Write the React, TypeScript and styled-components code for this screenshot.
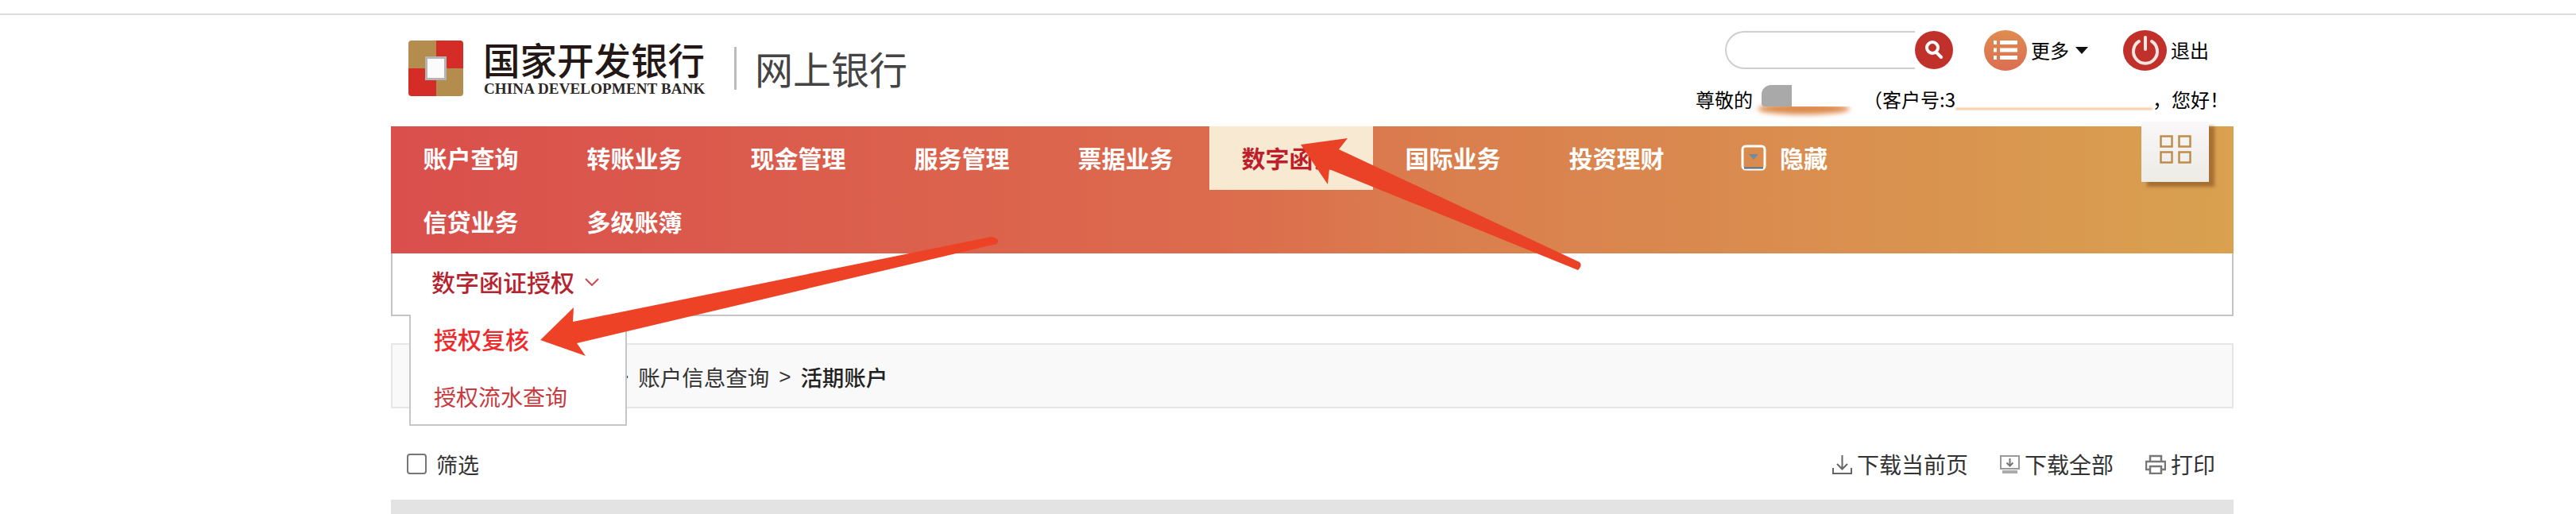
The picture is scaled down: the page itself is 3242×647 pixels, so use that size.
import styled, { createGlobalStyle } from "styled-components";

const CJK = `"Noto Sans CJK SC", "Noto Sans", sans-serif`;

const Global = createGlobalStyle`
  html, body {
    margin: 0;
    padding: 0;
    background: #fff;
    font-family: ${CJK};
  }
`;

const Page = styled.div`
  position: relative;
  width: 3242px;
  height: 647px;
  padding-top: 17px;
  box-sizing: border-box;
  overflow: hidden;
`;

const TopLine = styled.div`
  height: 2px;
  background: #dcdcdc;
`;

const Container = styled.div`
  width: 2319px;
  margin-left: 492px;
`;

const Header = styled.header`
  height: 140px;
  display: flex;
  justify-content: space-between;
`;

const Brand = styled.div`
  display: flex;
  align-items: flex-start;
  padding: 32px 0 0 22px;
`;

const Logo = styled.div`
  position: relative;
  width: 69px;
  height: 70px;
  border-radius: 4px;
  overflow: hidden;
  display: grid;
  grid-template-columns: 1fr 1fr;
  grid-template-rows: 1fr 1fr;
`;

const LogoCell = styled.div<{ $red?: boolean }>`
  background: ${(p) => (p.$red ? "#d42c27" : "#b38c4e")};
`;

const LogoCore = styled.div`
  position: absolute;
  left: 21px;
  top: 20px;
  width: 27px;
  height: 30px;
  box-sizing: border-box;
  background: #fbfbfb;
  border: 3px solid #b4b4b4;
`;

const BrandText = styled.div`
  margin-left: 25px;
  width: 280px;
`;

const BrandCn = styled.div`
  font-size: 46.5px;
  line-height: 50px;
  margin-top: -2px;
  font-weight: 500;
  color: #231815;
  white-space: nowrap;
`;

const BrandEn = styled.div`
  font-family: "Liberation Serif", serif;
  font-weight: 700;
  font-size: 19px;
  line-height: 20px;
  margin-top: 3px;
  margin-left: 1px;
  color: #2c2624;
  white-space: nowrap;
  letter-spacing: 0.15px;
`;

const Divider = styled.div`
  width: 3px;
  height: 54px;
  margin: 8px 0 0 36px;
  background: #bcbcbc;
`;

const Product = styled.div`
  margin: 5px 0 0 23px;
  font-size: 48px;
  line-height: 58px;
  font-weight: 400;
  color: #444;
  white-space: nowrap;
`;

const Account = styled.div`
  display: flex;
  flex-direction: column;
  align-items: flex-end;
  padding: 18px 6px 0 0;
`;

const ActionRow = styled.div`
  display: flex;
  align-items: center;
  height: 52px;
  padding-right: 25px;
`;

const SearchBox = styled.div`
  width: 239px;
  height: 48px;
  box-sizing: border-box;
  border: 2px solid #cfcfcf;
  border-right: 0;
  border-radius: 24px 0 0 24px;
`;

const RoundIcon = styled.div<{ $w: number; $h: number; $bg: string; $gap?: number }>`
  width: ${(p) => p.$w}px;
  height: ${(p) => p.$h}px;
  margin-left: ${(p) => p.$gap ?? 0}px;
  border-radius: 50%;
  background: ${(p) => p.$bg};
  display: flex;
  align-items: center;
  justify-content: center;
  flex: none;
`;

const ActionLabel = styled.span`
  margin-left: 5px;
  font-size: 24px;
  line-height: 30px;
  color: #000;
  white-space: nowrap;
`;

const Caret = styled.i`
  width: 0;
  height: 0;
  margin-left: 8px;
  border-left: 8px solid transparent;
  border-right: 8px solid transparent;
  border-top: 9px solid #111;
`;

const Greeting = styled.div`
  display: flex;
  align-items: center;
  height: 30px;
  margin-top: 21px;
  font-size: 24px;
  line-height: 30px;
  color: #000;
  white-space: nowrap;
`;

const Masked = styled.span<{ $w: number }>`
  position: relative;
  display: inline-block;
  width: ${(p) => p.$w}px;
  height: 30px;
`;

const CustomerNo = styled.span`
  margin-left: 4px;
`;

const Smudge = styled.i`
  position: absolute;
  left: 6px;
  top: 20px;
  width: 116px;
  height: 14px;
  border-radius: 50%;
  background: #dc8a4c;
  filter: blur(3px);
`;

const GreyPatch = styled.i`
  position: absolute;
  left: 11px;
  top: -3px;
  width: 38px;
  height: 27px;
  border-radius: 12px 0 0 4px;
  background: #a9a9a9;
`;

const WhitePatch = styled.i`
  position: absolute;
  left: 49px;
  top: -3px;
  width: 88px;
  height: 27px;
  background: #fff;
`;

const Underline = styled.i`
  position: absolute;
  left: 0;
  right: 0;
  bottom: 2px;
  height: 2px;
  background: #eeb37c;
  filter: blur(1px);
`;

const Nav = styled.nav`
  position: relative;
  height: 160px;
  background: linear-gradient(90deg, #da4f4c 0%, #dc6b4d 45%, #da7d4e 56%, #d9a150 100%);
`;

const NavRow = styled.div`
  display: flex;
  height: 80px;
`;

const NavItem = styled.a<{ $active?: boolean }>`
  width: 206px;
  display: flex;
  align-items: center;
  justify-content: center;
  padding: 0 5px 2px 0;
  box-sizing: border-box;
  font-size: 30px;
  font-weight: 700;
  line-height: 36px;
  white-space: nowrap;
  color: ${(p) => (p.$active ? "#bd1f2c" : "#fff")};
  background: ${(p) => (p.$active ? "#f8ead2" : "transparent")};
`;

const NavToggle = styled.a`
  display: flex;
  align-items: center;
  gap: 17px;
  margin-left: 51px;
  padding-bottom: 2px;
  font-size: 30px;
  font-weight: 700;
  color: #fff;
  white-space: nowrap;
`;

const GridButton = styled.div`
  position: absolute;
  left: 2203px;
  top: -6px;
  width: 85px;
  height: 76px;
  display: flex;
  align-items: center;
  justify-content: center;
  padding-bottom: 6px;
  box-sizing: border-box;
  background: linear-gradient(180deg, #f9f7f8, #ecebe5);
  box-shadow: 7px 6px 4px rgba(150, 95, 40, 0.75);
`;

const SubBar = styled.div`
  position: relative;
  height: 79px;
  box-sizing: border-box;
  border: 2px solid #c4c4c4;
  border-top: 0;
  display: flex;
  align-items: flex-start;
  padding: 17px 0 0 49px;
  color: #b5232f;
  font-size: 30px;
  line-height: 36px;
  font-weight: 500;
`;

const Chevron = styled.svg`
  margin: 14px 0 0 13px;
`;

const Dropdown = styled.div`
  position: absolute;
  left: 21px;
  top: 77px;
  z-index: 2;
  width: 274px;
  height: 140px;
  box-sizing: border-box;
  background: #fff;
  border: 2px solid #c6c6c6;
  border-top: 0;
  padding: 12px 0 0 29px;
`;

const DropItem = styled.div<{ $current?: boolean }>`
  height: 36px;
  line-height: 36px;
  white-space: nowrap;
  margin-bottom: 37px;
  font-size: ${(p) => (p.$current ? 30 : 28)}px;
  font-weight: ${(p) => (p.$current ? 500 : 400)};
  color: ${(p) => (p.$current ? "#ee2a2c" : "#c83a3e")};
`;

const Crumbs = styled.div`
  height: 82px;
  margin-top: 34px;
  box-sizing: border-box;
  border: 2px solid #e6e6e6;
  background: #f9f9f9;
  display: flex;
  align-items: center;
  padding: 2px 0 0 270px;
  font-size: 27.5px;
  color: #333;
  white-space: nowrap;
`;

const CrumbSep = styled.span`
  font-family: "Liberation Sans", sans-serif;
  font-size: 26px;
  margin: 0 12px;
`;

const CrumbCurrent = styled.span`
  font-weight: 500;
  color: #222;
`;

const Tools = styled.div`
  height: 115px;
  display: flex;
  align-items: center;
  justify-content: space-between;
  box-sizing: border-box;
  padding: 25px 23px 0 20px;
`;

const Filter = styled.label`
  display: flex;
  align-items: center;
  gap: 12px;
  font-size: 27px;
  color: #333;
`;

const Check = styled.i`
  width: 25px;
  height: 26px;
  box-sizing: border-box;
  border: 2px solid #767676;
  border-radius: 4px;
`;

const ToolLinks = styled.div`
  display: flex;
  align-items: center;
  gap: 40px;
`;

const ToolLink = styled.a`
  display: flex;
  align-items: center;
  gap: 6px;
  font-size: 28px;
  color: #333;
  white-space: nowrap;
`;

const TableHead = styled.div`
  height: 18px;
  background: #e3e3e3;
`;

const Annotations = styled.svg`
  position: absolute;
  left: 0;
  top: 0;
  z-index: 5;
  pointer-events: none;
`;

const navTop = ["账户查询", "转账业务", "现金管理", "服务管理", "票据业务", "数字函证", "国际业务", "投资理财"];

export default function App() {
  return (
    <Page>
      <Global />
      <TopLine />
      <Container>
        <Header>
          <Brand>
            <Logo>
              <LogoCell />
              <LogoCell $red />
              <LogoCell $red />
              <LogoCell />
              <LogoCore />
            </Logo>
            <BrandText>
              <BrandCn>国家开发银行</BrandCn>
              <BrandEn>CHINA DEVELOPMENT BANK</BrandEn>
            </BrandText>
            <Divider />
            <Product>网上银行</Product>
          </Brand>

          <Account>
            <ActionRow>
              <SearchBox />
              <RoundIcon $w={48} $h={48} $bg="#c0312b">
                <svg width="28" height="28" viewBox="0 0 28 28" fill="none" stroke="#fff" strokeLinecap="round">
                  <circle cx="12" cy="11" r="7" strokeWidth="4" />
                  <path d="M17 17l6 6" strokeWidth="4" />
                </svg>
              </RoundIcon>
              <RoundIcon $w={54} $h={51} $bg="linear-gradient(180deg, #e08c50, #dc6d50)" $gap={39}>
                <svg width="30" height="26" viewBox="0 0 30 26" fill="#fff">
                  <rect x="0" y="1" width="4" height="5" />
                  <rect x="8" y="1" width="22" height="5" />
                  <rect x="0" y="10.5" width="4" height="5" />
                  <rect x="8" y="10.5" width="22" height="5" />
                  <rect x="0" y="20" width="4" height="5" />
                  <rect x="8" y="20" width="22" height="5" />
                </svg>
              </RoundIcon>
              <ActionLabel>更多</ActionLabel>
              <Caret />
              <RoundIcon $w={55} $h={51} $bg="#c0312b" $gap={44}>
                <svg width="36" height="38" viewBox="0 0 36 38" fill="none" stroke="#f6e4e0" strokeWidth="4" strokeLinecap="round">
                  <path d="M18 3v15" />
                  <path d="M10 8a15 15 0 1 0 16 0" />
                </svg>
              </RoundIcon>
              <ActionLabel>退出</ActionLabel>
            </ActionRow>
            <Greeting>
              尊敬的
              <Masked $w={135}>
                <Smudge />
                <GreyPatch />
                <WhitePatch />
              </Masked>
              <CustomerNo>（客户号:3</CustomerNo>
              <Masked $w={248}>
                <Underline />
              </Masked>
              ，您好！
            </Greeting>
          </Account>
        </Header>

        <Nav>
          <NavRow>
            {navTop.map((label) => (
              <NavItem key={label} $active={label === "数字函证"}>
                {label}
              </NavItem>
            ))}
            <NavToggle>
              <svg width="32" height="33" viewBox="0 0 32 33" fill="none">
                <rect x="2" y="2" width="28" height="29" rx="4" stroke="#fff" strokeWidth="3" />
                <path d="M4 29.5h24" stroke="#4a6f90" strokeWidth="2" />
                <path d="M10 12h12l-6 7z" fill="#6f8ba0" />
              </svg>
              隐藏
            </NavToggle>
          </NavRow>
          <NavRow>
            <NavItem>信贷业务</NavItem>
            <NavItem>多级账簿</NavItem>
          </NavRow>
          <GridButton>
            <svg width="40" height="36" viewBox="0 0 40 36" fill="none" stroke="#bf8c4c" strokeWidth="2.5">
              <rect x="1.5" y="1.5" width="14" height="13" />
              <rect x="24.5" y="1.5" width="14" height="13" />
              <rect x="1.5" y="21.5" width="14" height="13" />
              <rect x="24.5" y="21.5" width="14" height="13" />
            </svg>
          </GridButton>
        </Nav>

        <SubBar>
          数字函证授权
          <Chevron width="18" height="10" viewBox="0 0 18 10" fill="none" stroke="#cb4a50" strokeWidth="2">
            <path d="M1 1l8 8 8-8" />
          </Chevron>
          <Dropdown>
            <DropItem $current>授权复核</DropItem>
            <DropItem>授权流水查询</DropItem>
          </Dropdown>
        </SubBar>

        <Crumbs>
          <CrumbSep>&gt;</CrumbSep>
          账户信息查询
          <CrumbSep>&gt;</CrumbSep>
          <CrumbCurrent>活期账户</CrumbCurrent>
        </Crumbs>

        <Tools>
          <Filter>
            <Check />
            筛选
          </Filter>
          <ToolLinks>
            <ToolLink>
              <svg width="25" height="25" viewBox="0 0 25 25" fill="none" stroke="#666" strokeWidth="2">
                <path d="M12.5 1v17M6 12l6.5 6.5L19 12" />
                <path d="M1 17v7h23v-7" />
              </svg>
              下载当前页
            </ToolLink>
            <ToolLink>
              <svg width="25" height="25" viewBox="0 0 25 25" fill="none" stroke="#999" strokeWidth="2">
                <path d="M1 18V2h23v16z" />
                <path d="M12.5 5v9M8.5 10.5l4 4 4-4" stroke="#777" />
                <path d="M3 22h19" strokeWidth="4" stroke="#aaa" />
              </svg>
              下载全部
            </ToolLink>
            <ToolLink>
              <svg width="26" height="25" viewBox="0 0 26 25" fill="none" stroke="#777" strokeWidth="2.5">
                <path d="M6 9V2h14v7" />
                <path d="M6 19H1V9h24v10h-5" />
                <path d="M6 15h14v9H6z" />
              </svg>
              打印
            </ToolLink>
          </ToolLinks>
        </Tools>

        <TableHead />
      </Container>

      <Annotations width="3242" height="647" viewBox="0 0 3242 647">
        <path
          d="M1637 182L1696 174L1685 188L1988 330Q1992 334 1986 340L1673 213L1671 232Z"
          fill="#ea4227"
        />
        <path
          d="M680 428L722 387L721 405L1248 298Q1258 300 1256 305Q1254 308 1250 308L726 432L737 448Z"
          fill="#ee4227"
        />
      </Annotations>
    </Page>
  );
}
